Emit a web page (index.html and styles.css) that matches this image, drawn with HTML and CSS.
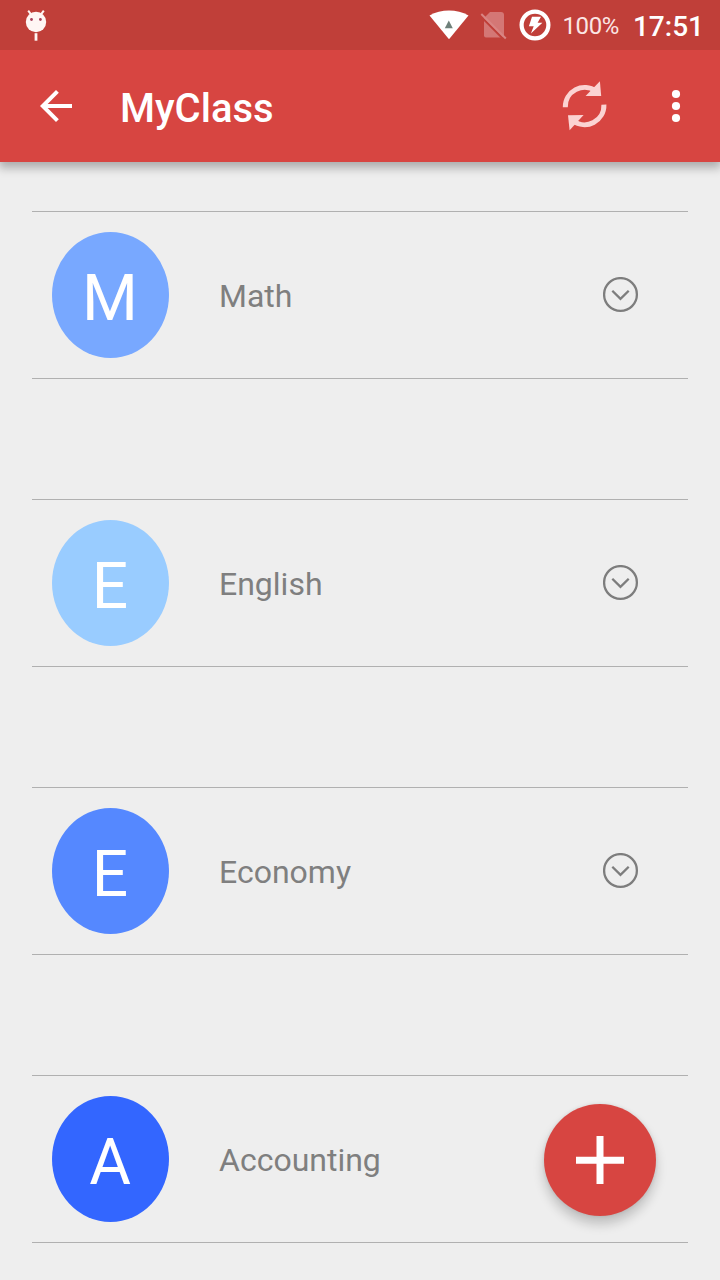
FILE: index.html
```html
<!DOCTYPE html>
<html lang="en">
<head>
  <meta charset="UTF-8" />
  <meta name="viewport" content="width=device-width, initial-scale=1" />
  <title>MyClass</title>
  <link rel="stylesheet" href="styles.css">
</head>
<body>

<div class="statusbar">
  <svg class="debug" width="24" height="34" viewBox="0 0 24 34">
    <path d="M4.2 2.6l3 4M19.8 2.6l-3 4" stroke="#fff6f4" stroke-width="2" />
    <circle cx="12" cy="14" r="10.2" fill="#fff6f4" />
    <circle cx="7.5" cy="11.5" r="1.4" fill="#a8405a" />
    <circle cx="16.4" cy="11.5" r="1.4" fill="#a8405a" />
    <path d="M10.6 25.2h2.8v7.5h-2.8z" fill="#fff6f4" />
  </svg>
  <svg class="wifi" width="40" height="30" viewBox="0 0 40 30">
    <path d="M0.5 5.5C12-1.2 28-1.2 39.5 5.5L20 29.3z" fill="#fff" />
    <path d="M19.8 10.6l4 7.6h-8z" fill="#6f807a" />
  </svg>
  <svg class="sim" width="28" height="30" viewBox="0 0 28 30">
    <path d="M4 8l6-6h11a3 3 0 0 1 3 3v20.5a2 2 0 0 1-2 2H6a2 2 0 0 1-2-2z" fill="#d47775" />
    <path d="M0.2 5.8l23.8 24" stroke="#c03f39" stroke-width="2" />
    <path d="M1.3 4L25.8 28.5" stroke="#d98583" stroke-width="2" />
  </svg>
  <svg class="power" width="32" height="32" viewBox="0 0 32 32">
    <circle cx="16" cy="16" r="13.4" fill="none" stroke="#fff" stroke-width="4.2" />
    <path d="M13 7.7h9l-3.4 6h4.8L11.9 24.6l2.8-7.3h-4.8z" fill="#fff" />
  </svg>
  <span class="battery">100%</span>
  <span class="clock">17:51</span>
</div>

<div class="toolbar">
  <svg class="back" width="48" height="48" viewBox="0 0 24 24">
    <path d="M20 11H7.83l5.59-5.59L12 4l-8 8 8 8 1.41-1.41L7.83 13H20z" fill="#fff" />
  </svg>
  <h1 class="title">MyClass</h1>
  <svg class="refresh" width="48" height="52" viewBox="0 0 48 52">
    <g fill="none" stroke="#fbd3d2" stroke-width="5">
      <path d="M5.3 27.2A19.3 19.3 0 0 1 36 11.2" />
      <path d="M43.9 24.6A19.3 19.3 0 0 1 13 40.8" />
    </g>
    <path d="M39.9 1.2L41.2 16H25.6z" fill="#fbd3d2" />
    <path d="M8 35.2L23.6 35 9.6 50.3z" fill="#fbd3d2" />
  </svg>
  <svg class="more" width="48" height="48" viewBox="0 0 48 48">
    <g fill="#fff">
      <circle cx="24" cy="12" r="4.1" />
      <circle cx="24" cy="24" r="4.1" />
      <circle cx="24" cy="36" r="4.1" />
    </g>
  </svg>
</div>

<div class="list">
  <div class="row">
    <div class="avatar math">M</div>
    <div class="name">Math</div>
    <svg class="expand" width="36" height="36" viewBox="0 0 36 36">
      <circle cx="17.5" cy="17.5" r="16.4" />
      <path d="M9.3 13.7l8.2 8.2 8.2-8.2" />
    </svg>
  </div>
  <div class="row">
    <div class="avatar english">E</div>
    <div class="name">English</div>
    <svg class="expand" width="36" height="36" viewBox="0 0 36 36">
      <circle cx="17.5" cy="17.5" r="16.4" />
      <path d="M9.3 13.7l8.2 8.2 8.2-8.2" />
    </svg>
  </div>
  <div class="row">
    <div class="avatar economy">E</div>
    <div class="name">Economy</div>
    <svg class="expand" width="36" height="36" viewBox="0 0 36 36">
      <circle cx="17.5" cy="17.5" r="16.4" />
      <path d="M9.3 13.7l8.2 8.2 8.2-8.2" />
    </svg>
  </div>
  <div class="row">
    <div class="avatar accounting">A</div>
    <div class="name">Accounting</div>
  </div>
</div>

<div class="fab">
  <svg width="48" height="48" viewBox="0 0 48 48">
    <path d="M24 0v48M0 24.2h48" stroke="#fff" stroke-width="7" />
  </svg>
</div>

</body>
</html>
```
FILE: styles.css
```css
* {
  box-sizing: border-box;
}

body {
  margin: 0;
  height: 1280px;
  overflow: hidden;
  background: #eeeeee;
  font-family: Roboto, sans-serif;
}

svg {
  display: block;
  flex: none;
}

.statusbar {
  position: relative;
  z-index: 1;
  display: flex;
  align-items: flex-start;
  height: 50px;
  padding: 0 16px 0 24px;
  background: #c03f39;
  color: #fff;
}

.debug {
  margin-top: 8px;
}

.wifi {
  margin: 10px 0 0 auto;
}

.sim {
  margin: 10px 0 0 11px;
}

.power {
  margin: 9px 0 0 11px;
}

.battery {
  margin-left: 12px;
  font-size: 24px;
  letter-spacing: -0.4px;
  line-height: 52px;
  color: #fbe6e4;
}

.clock {
  margin-left: 14px;
  font-size: 28px;
  font-weight: 500;
  line-height: 54px;
}

.toolbar {
  display: flex;
  align-items: center;
  height: 112px;
  padding: 0 20px 0 32px;
  background: #d74541;
  color: #fff;
  box-shadow: 0 5px 9px 1px rgba(0, 0, 0, 0.28);
}

.title {
  flex: 1;
  margin: 0;
  padding: 6px 0 0 40px;
  font-size: 40px;
  font-weight: 500;
  line-height: 48px;
}

.refresh {
  margin-right: 44px;
}

.list {
  display: flex;
  flex-direction: column;
  gap: 120px;
  padding: 49px 32px 0;
}

.row {
  display: flex;
  align-items: center;
  height: 168px;
  padding: 0 49px 0 20px;
  border-top: 1px solid #b0b0b0;
  border-bottom: 1px solid #b0b0b0;
}

.avatar {
  width: 117px;
  height: 126px;
  padding: 4px 1px 0 0;
  border-radius: 50%;
  color: #fff;
  font-size: 64px;
  line-height: 126px;
  text-align: center;
}

.math {
  background: #78a8ff;
}

.english {
  background: #99ccff;
}

.economy {
  background: #5588ff;
}

.accounting {
  background: #3366ff;
}

.name {
  flex: 1;
  margin-left: 50px;
  padding-top: 2px;
  color: #7f7f7f;
  font-size: 32px;
  line-height: 40px;
}

.expand {
  fill: none;
  stroke: #7d7d7d;
  stroke-width: 2.3;
}

.fab {
  position: fixed;
  right: 64px;
  bottom: 64px;
  display: flex;
  align-items: center;
  justify-content: center;
  width: 112px;
  height: 112px;
  border-radius: 50%;
  background: #d74541;
  box-shadow: 0 8px 12px rgba(0, 0, 0, 0.2), 0 0 4px rgba(0, 0, 0, 0.1);
}
```
